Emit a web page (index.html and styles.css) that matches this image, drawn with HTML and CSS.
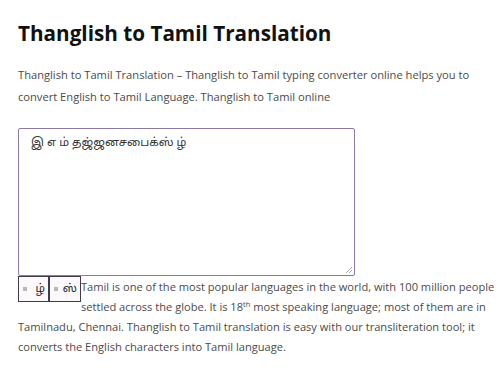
FILE: index.html
```html
<!DOCTYPE html>
<html>
<head>
<meta charset="utf-8">
<link rel="stylesheet" href="styles.css">
</head>
<body>
<div class="page">
  <h1 class="title">Thanglish to Tamil Translation</h1>
  <p class="intro">Thanglish to Tamil Translation – Thanglish to Tamil typing converter online helps you to convert English to Tamil Language. Thanglish to Tamil online</p>
  <div class="editor">
    <div class="area">இ எ ம் தஜ்ஜனசபைக்ஸ் ழ்</div>
    <span class="grip"></span>
  </div>
  <div class="body-text">
    <span class="pick"><span class="dot"></span><span class="ch">ழ்</span></span><span class="pick"><span class="dot"></span><span class="ch">ஸ்</span></span>
    Tamil is one of the most popular languages in the world, with 100 million people settled across the globe. It is 18<sup>th</sup> most speaking language; most of them are in Tamilnadu, Chennai. Thanglish to Tamil translation is easy with our transliteration tool; it converts the English characters into Tamil language.
  </div>
</div>
</body>
</html>
```

FILE: styles.css
```css
html, body {
  margin: 0;
  padding: 0;
  background: #ffffff;
}
.page {
  padding: 17px 1px 0 18px;
  font-family: "Open Sans", "Noto Sans Tamil", sans-serif;
}
.title {
  margin: 0;
  font-size: 20.7px;
  line-height: 32px;
  font-weight: 700;
  color: #111111;
}
.intro {
  margin: 15px 0 0 0;
  max-width: 462px;
  font-size: 11.15px;
  line-height: 22px;
  color: #4a4a4a;
}
.editor {
  position: relative;
  margin-top: 20px;
  width: 337px;
  height: 148px;
  box-sizing: border-box;
  border: 1px solid #8c7aa8;
  border-radius: 2px;
}
.area {
  padding: 7px 12px;
  font-size: 11.5px;
  color: #333333;
  font-family: "Noto Sans Tamil", "Open Sans", sans-serif;
}
.grip {
  position: absolute;
  right: 2px;
  bottom: 2px;
  width: 6px;
  height: 6px;
  background: linear-gradient(135deg, transparent 45%, #aaa 45%, #aaa 55%, transparent 55%, transparent 70%, #aaa 70%, #aaa 80%, transparent 80%);
}
.body-text {
  padding-top: 1px;
  font-size: 11.1px;
  line-height: 20px;
  color: #4a4a4a;
}
.body-text sup {
  font-size: 7.5px;
  line-height: 0;
  vertical-align: 4px;
}
.pick {
  float: left;
  margin-top: -1px;
  display: flex;
  align-items: center;
  justify-content: space-between;
  height: 26px;
  box-sizing: border-box;
  border: 1px solid #43394f;
  padding: 0 3px 0 4px;
  background: #fbf9fc;
}
.pick:first-child {
  width: 30px;
  border-right: 0;
}
.pick:nth-child(2) {
  width: 33px;
  border-left-width: 2px;
}
.dot {
  width: 4px;
  height: 4px;
  background: #b8b8b8;
}
.ch {
  font-size: 11px;
  color: #222;
  font-family: "Noto Sans Tamil", "Open Sans", sans-serif;
}
```
